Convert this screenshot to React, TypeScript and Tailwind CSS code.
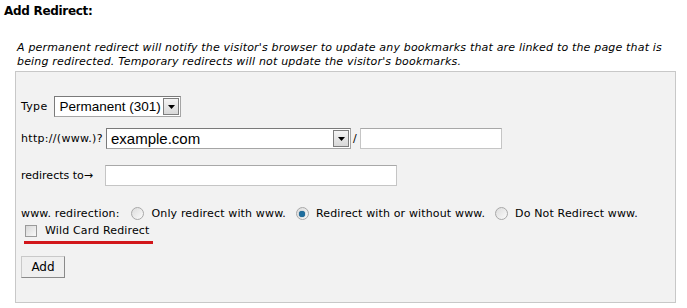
import React from 'react';

const verdana = { fontFamily: '"DejaVu Sans", Verdana, sans-serif' };

function FakeSelect({ value, width, big }: { value: string; width: string; big?: boolean }) {
  return (
    <div
      className={`flex items-center bg-white border border-[#a5a5a5] border-t-[#7a7a7a] border-l-[#7a7a7a] h-[21px] ${width}`}
    >
      <span
        className={`flex-1 pl-[4px] text-black ${big ? 'text-[15px]' : 'text-[13.5px]'} leading-none whitespace-nowrap`}
        style={{ fontFamily: '"Liberation Sans", Arial, sans-serif' }}
      >
        {value}
      </span>
      <span className="mr-[1px] flex h-[17px] w-[16px] items-center justify-center border border-[#7d7d7d] bg-gradient-to-b from-[#f4f4f4] to-[#d8d8d8]">
        <svg width="7" height="4" viewBox="0 0 7 4">
          <path d="M0 0h7L3.5 4z" fill="#000" />
        </svg>
      </span>
    </div>
  );
}

function Radio({ checked }: { checked?: boolean }) {
  return (
    <span className="inline-flex h-[13px] w-[13px] items-center justify-center rounded-full border border-[#a8a8a8] bg-gradient-to-br from-[#dcdcdc] to-[#fbfbfb]">
      {checked && <span className="h-[6px] w-[6px] rounded-full bg-[#1f6f9f] shadow-[0_0_1px_#0b3b5b]" />}
    </span>
  );
}

export default function App() {
  return (
    <div className="w-[687px] h-[308px] bg-white text-[12px] text-black" style={verdana}>
      <div className="pl-[4px] pt-[4px] font-bold text-[12px] leading-[15px] tracking-[-0.3px]">Add Redirect:</div>
      <p className="mt-[22px] pl-[17px] italic text-[11px] leading-[14px] tracking-[0.18px]">
        A permanent redirect will notify the visitor's browser to update any bookmarks that are linked to the page that is
        <br />
        being redirected. Temporary redirects will not update the visitor's bookmarks.
      </p>
      <div className="ml-[15px] mt-[2px] w-[661px] h-[232px] border border-[#c8c8c8] bg-[#f2f2f2] pl-[5px] pt-[24px]">
        <div className="flex items-center gap-[7px] text-[11px] leading-[13px]">
          <span className="tracking-[0.3px]">Type</span>
          <FakeSelect value="Permanent (301)" width="w-[127px]" />
        </div>
        <div className="mt-[11px] flex items-center text-[11px] leading-[13px]">
          <span className="w-[85px] whitespace-nowrap tracking-[0.3px]">http://(www.)?</span>
          <FakeSelect value="example.com" width="w-[245px]" big />
          <span className="ml-[2px] mr-[3px]">/</span>
          <div className="h-[21px] w-[142px] border border-[#c5c5c5] border-t-[#a8a8a8] bg-white" />
        </div>
        <div className="mt-[16px] flex items-center text-[11px] leading-[13px]">
          <span className="w-[84px] whitespace-nowrap">redirects to→</span>
          <div className="h-[21px] w-[292px] border border-[#c5c5c5] border-t-[#a8a8a8] bg-white" />
        </div>
        <div className="mt-[21px] flex items-center text-[11px] leading-[13px] whitespace-nowrap tracking-[0.15px]">
          <span>www. redirection:</span>
          <span className="ml-[12px] mr-[7px] flex"><Radio /></span>
          <span>Only redirect with www.</span>
          <span className="ml-[10px] mr-[7px] flex"><Radio checked /></span>
          <span>Redirect with or without www.</span>
          <span className="ml-[10px] mr-[7px] flex"><Radio /></span>
          <span>Do Not Redirect www.</span>
        </div>
        <div className="mt-[4px] inline-flex flex-col">
          <div className="flex items-center pl-[4px] text-[11px] leading-[13px] tracking-[0.15px]">
            <span className="h-[12px] w-[12px] border border-[#9a9a9a] bg-gradient-to-br from-[#d8d8d8] to-[#f8f8f8]" />
            <span className="ml-[8px]">Wild Card Redirect</span>
          </div>
          <div className="mt-[4px] ml-[3px] h-[3px] w-[129px] bg-[#d2161b]" />
        </div>
        <div className="mt-[12px] flex">
          <button className="h-[22px] w-[44px] border border-[#c9c9c9] border-r-[#8a8a8a] border-b-[#8a8a8a] bg-[#efefef] text-[12px] leading-none">
            Add
          </button>
        </div>
      </div>
    </div>
  );
}
